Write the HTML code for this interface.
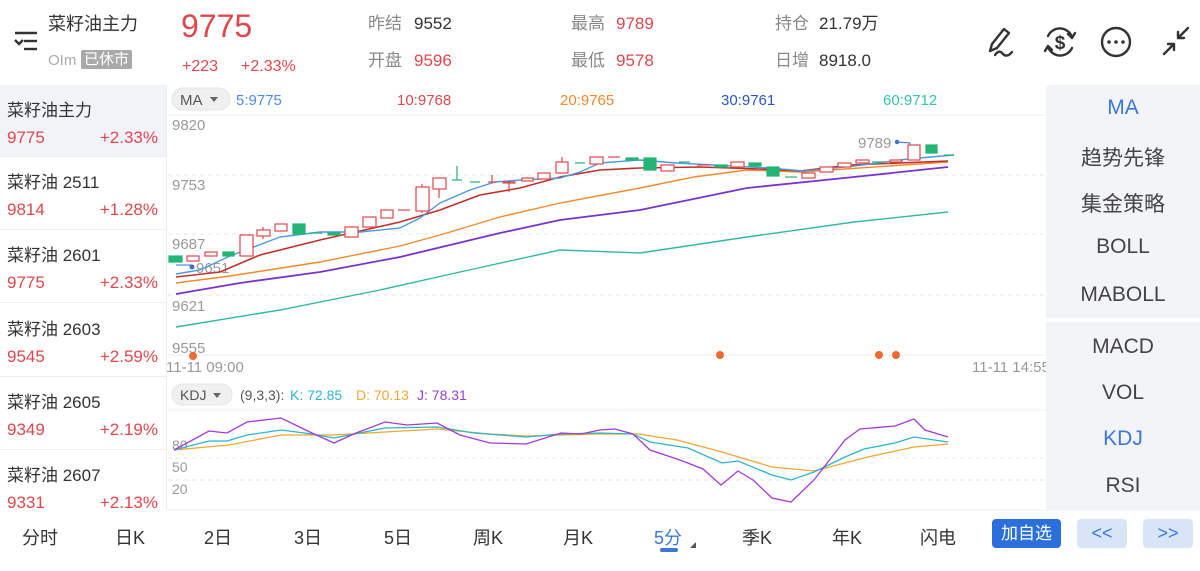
<!DOCTYPE html>
<html><head><meta charset="utf-8"><style>
*{margin:0;padding:0;box-sizing:border-box}
body{width:1200px;height:571px;background:#fff;font-family:"Liberation Sans","Noto Sans CJK SC",sans-serif;position:relative;overflow:hidden;color:#333}
.a{position:absolute;white-space:nowrap;line-height:1}
.r{color:#e0474d}.g{color:#888}.d{color:#333}
.li{position:absolute;left:0;width:166px;height:73px;border-bottom:1px solid #eee}
.li .n{position:absolute;left:7px;top:11px;font-size:17px;color:#333}
.li .p{position:absolute;left:7px;top:43px;font-size:17px;color:#e0474d}
.li .c{position:absolute;right:8px;top:43px;font-size:17px;color:#e0474d}
.rp{position:absolute;left:1046px;width:154px;background:#f3f4f7}
.rp div{position:absolute;width:154px;text-align:center;font-size:21px;color:#444}
.tab{position:absolute;top:524px;font-size:18px;color:#333}
</style></head><body>
<!-- header -->
<svg class="a" style="left:12px;top:30px" width="28" height="24" viewBox="0 0 28 24"><g stroke="#333" stroke-width="2.4" fill="none"><line x1="3" y1="3" x2="25" y2="3"/><line x1="12" y1="11" x2="25" y2="11"/><line x1="12" y1="19" x2="25" y2="19"/><polyline points="3,10 7,14 11,10"/></g></svg>
<div class="a d" style="left:48px;top:15px;font-size:18px">菜籽油主力</div>
<div class="a g" style="left:48px;top:53px;font-size:15px;color:#aaa">OIm</div>
<div class="a" style="left:81px;top:50px;font-size:15px;background:#a9a9a9;color:#fff;padding:2px 3px;border-radius:2px">已休市</div>
<div class="a r" style="left:181px;top:10px;font-size:32px">9775</div>
<div class="a r" style="left:182px;top:59px;font-size:16px">+223</div>
<div class="a r" style="left:241px;top:59px;font-size:16px">+2.33%</div>
<div class="a g" style="left:368px;top:15px;font-size:17px">昨结</div><div class="a d" style="left:414px;top:15px;font-size:17px">9552</div>
<div class="a g" style="left:368px;top:52px;font-size:17px">开盘</div><div class="a r" style="left:414px;top:52px;font-size:17px">9596</div>
<div class="a g" style="left:571px;top:15px;font-size:17px">最高</div><div class="a r" style="left:616px;top:15px;font-size:17px">9789</div>
<div class="a g" style="left:571px;top:52px;font-size:17px">最低</div><div class="a r" style="left:616px;top:52px;font-size:17px">9578</div>
<div class="a g" style="left:775px;top:15px;font-size:17px">持仓</div><div class="a d" style="left:819px;top:15px;font-size:17px">21.79万</div>
<div class="a g" style="left:775px;top:52px;font-size:17px">日增</div><div class="a d" style="left:819px;top:52px;font-size:17px">8918.0</div>
<svg class="a" style="left:985px;top:24px" width="210" height="36" viewBox="0 0 210 36"><g stroke="#333" stroke-width="2.4" fill="none" stroke-linecap="round" stroke-linejoin="round">
<path d="M5 27 L7 20 L19 5 L24 9 L12 24 Z"/><path d="M10 31 Q14 25 18 30 Q22 34 27 28"/>
<path d="M63 12 A13 13 0 0 1 87 13"/><path d="M83 10 L87 14 L90 9"/>
<path d="M87 24 A13 13 0 0 1 63 23"/><path d="M67 26 L63 22 L60 27"/>
<circle cx="131" cy="18" r="14"/>
<path d="M203 4 L193 14 M193 8 L193 14 L199 14 M179 30 L189 20 M183 20 L189 20 L189 26"/></g>
<text x="75" y="25" font-size="19" font-weight="bold" fill="#333" text-anchor="middle" font-family="Liberation Sans">$</text>
<g fill="#333"><circle cx="124" cy="18" r="1.8"/><circle cx="131" cy="18" r="1.8"/><circle cx="138" cy="18" r="1.8"/></g></svg>
<!-- left list -->
<div class="li" style="top:85px;background:#f1f3f9;height:72px"><div class="n">菜籽油主力</div><div class="p">9775</div><div class="c">+2.33%</div></div>
<div class="li" style="top:157px"><div class="n">菜籽油 2511</div><div class="p">9814</div><div class="c">+1.28%</div></div>
<div class="li" style="top:230px"><div class="n">菜籽油 2601</div><div class="p">9775</div><div class="c">+2.33%</div></div>
<div class="li" style="top:304px"><div class="n">菜籽油 2603</div><div class="p">9545</div><div class="c">+2.59%</div></div>
<div class="li" style="top:377px"><div class="n">菜籽油 2605</div><div class="p">9349</div><div class="c">+2.19%</div></div>
<div class="li" style="top:450px;border:none"><div class="n">菜籽油 2607</div><div class="p">9331</div><div class="c">+2.13%</div></div>
<div class="a" style="left:166px;top:85px;width:1px;height:425px;background:#eee"></div>
<!-- chart -->
<svg class="a" style="left:0;top:0" width="1200" height="571" viewBox="0 0 1200 571" font-family="Liberation Sans">
<rect x="172" y="88" width="58" height="22" rx="11" fill="#f0f0f0" stroke="#e4e4e4"/>
<text x="180" y="105" font-size="15" fill="#555">MA</text><path d="M210 97 L218 97 L214 102Z" fill="#666"/>
<text x="236" y="105" font-size="15" fill="#4a8fe0">5:9775</text>
<text x="397" y="105" font-size="15" fill="#e0474d">10:9768</text>
<text x="560" y="105" font-size="15" fill="#ef8a2c">20:9765</text>
<text x="721" y="105" font-size="15" fill="#2b55c0">30:9761</text>
<text x="883" y="105" font-size="15" fill="#33c4b0">60:9712</text>
<line x1="168" y1="115" x2="1046" y2="115" stroke="#eee"/>
<g stroke="#e6e6e6" stroke-dasharray="4,4"><line x1="168" y1="175" x2="1046" y2="175"/><line x1="168" y1="234" x2="1046" y2="234"/><line x1="168" y1="295" x2="1046" y2="295"/></g>
<line x1="168" y1="355" x2="1046" y2="355" stroke="#eee"/>
<g font-size="15" fill="#999"><text x="172" y="130">9820</text><text x="172" y="190">9753</text><text x="172" y="249">9687</text><text x="172" y="311">9621</text><text x="172" y="353">9555</text><text x="196" y="273">9651</text><text x="858" y="148">9789</text>
<text x="166" y="372">11-11 09:00</text><text x="972" y="372">11-11 14:55</text></g>
<polyline points="176,265 192,265" stroke="#3b6fd0" fill="none"/><circle cx="192" cy="267" r="2.5" fill="#3b6fd0"/>
<polyline points="897,142 910,143 910,146" stroke="#3b6fd0" fill="none"/><circle cx="897" cy="142" r="2.2" fill="#3b6fd0"/>
<g fill="none" stroke-width="1.4">
<polyline stroke="#33b8a5" points="176,327 280,310 380,290 460,272 560,250 640,253 747,237 854,222 948,212"/>
<polyline stroke="#7a33cc" stroke-width="1.8" points="176,294 240,283 320,272 400,257 500,233 560,220 640,210 747,188 854,177 948,167"/>
<polyline stroke="#ef8a2c" points="176,283 230,276 320,262 400,246 440,235 500,217 560,203 640,188 694,177 747,170 801,172 948,162"/>
<polyline stroke="#c0302a" stroke-width="1.6" points="176,277 220,272 260,255 320,240 400,222 440,210 480,195 520,188 560,177 600,170 640,168 700,167 760,169 800,171 850,165 948,161"/>
<polyline stroke="#4a9ae0" points="176,274 200,270 230,256 280,237 320,232 360,232 400,228 420,218 440,203 470,190 495,182 520,180 560,178 580,172 600,163 640,160 676,163 769,168 804,171 854,166 908,159 954,155"/>
</g>
<g stroke="#e0474d" fill="#fff" stroke-width="1.2">
<rect x="187" y="256" width="12" height="5"/><rect x="205" y="252" width="12" height="4"/><rect x="240" y="235" width="13" height="21"/><line x1="263" y1="227" x2="263" y2="239"/><rect x="257" y="230" width="13" height="6"/><rect x="275" y="224" width="12" height="7"/><rect x="345" y="227" width="13" height="10"/><rect x="363" y="217" width="13" height="10"/><rect x="381" y="210" width="12" height="8"/><line x1="398" y1="210" x2="410" y2="210"/><line x1="422" y1="184" x2="422" y2="213"/><rect x="416" y="187" width="13" height="24"/><line x1="439" y1="189" x2="439" y2="198"/><rect x="433" y="178" width="13" height="11"/><line x1="488" y1="182" x2="497" y2="182"/><line x1="492" y1="175" x2="492" y2="182"/><line x1="509" y1="182" x2="509" y2="192"/><rect x="503" y="182" width="12" height="1"/><rect x="522" y="178" width="11" height="3"/><rect x="538" y="173" width="12" height="6"/><line x1="562" y1="157" x2="562" y2="162"/><rect x="556" y="162" width="12" height="11"/><rect x="590" y="157" width="13" height="7"/><line x1="608" y1="157" x2="620" y2="157"/><rect x="661" y="165" width="13" height="6"/><line x1="697" y1="165" x2="710" y2="165"/><rect x="731" y="162" width="13" height="5"/><rect x="802" y="173" width="13" height="5"/><rect x="820" y="167" width="13" height="5"/><rect x="838" y="163" width="13" height="4"/><rect x="856" y="160" width="13" height="3"/><rect x="890" y="160" width="12" height="2"/><rect x="908" y="145" width="12" height="15"/>
</g>
<g fill="#22b573" stroke="#22b573" stroke-width="1.2">
<rect x="169" y="256" width="13" height="6"/><rect x="223" y="252" width="11" height="4"/><rect x="293" y="224" width="12" height="10"/><line x1="310" y1="233" x2="322" y2="233"/><rect x="328" y="233" width="12" height="2"/><line x1="457" y1="166" x2="457" y2="180"/><line x1="452" y1="180" x2="462" y2="180"/><line x1="470" y1="182" x2="480" y2="182"/><line x1="575" y1="163" x2="585" y2="163"/><rect x="626" y="158" width="12" height="2"/><rect x="644" y="158" width="12" height="12"/><line x1="679" y1="162" x2="690" y2="162"/><rect x="715" y="165" width="12" height="2"/><rect x="749" y="163" width="12" height="3"/><rect x="767" y="167" width="12" height="9"/><line x1="785" y1="177" x2="797" y2="177"/><line x1="872" y1="162" x2="885" y2="162"/><rect x="926" y="145" width="11" height="8"/><line x1="944" y1="155" x2="954" y2="155"/>
</g>
<g fill="#f26a2e"><circle cx="193" cy="356" r="4"/><circle cx="720" cy="355" r="4"/><circle cx="879" cy="355" r="4"/><circle cx="896" cy="355" r="4"/></g>
<!-- KDJ -->
<rect x="172" y="384" width="60" height="21" rx="10.5" fill="#f0f0f0" stroke="#e4e4e4"/>
<text x="180" y="400" font-size="14" fill="#555">KDJ</text><path d="M213 393 L221 393 L217 398Z" fill="#666"/>
<text x="240" y="400" font-size="14" fill="#555">(9,3,3):</text>
<text x="290" y="400" font-size="14" fill="#2bb5cc">K: 72.85</text>
<text x="356" y="400" font-size="14" fill="#f0a830">D: 70.13</text>
<text x="417" y="400" font-size="14" fill="#9a40d0">J: 78.31</text>
<line x1="168" y1="410" x2="1046" y2="410" stroke="#f2f2f2"/>
<g stroke="#e6e6e6" stroke-dasharray="4,4"><line x1="168" y1="458" x2="1046" y2="458"/><line x1="168" y1="480" x2="1046" y2="480"/></g>
<line x1="168" y1="510" x2="1200" y2="510" stroke="#eee"/>
<g font-size="14" fill="#999"><text x="172" y="450">80</text><text x="172" y="472">50</text><text x="172" y="494">20</text></g>
<g fill="none" stroke-width="1.3">
<polyline stroke="#f0a830" points="174,450 229,445 281,435 334,435 385,432 437,429 490,434 526,436 600,434 638,434 677,440 722,452 772,467 814,471 868,457 914,447 948,444"/>
<polyline stroke="#2bb5cc" points="174,450 209,441 227,441 247,435 281,430 312,434 334,438 385,428 437,427 474,433 526,437 561,434 600,433 633,434 650,442 688,448 722,463 738,461 772,475 791,480 814,472 845,457 864,449 895,443 914,437 948,442"/>
<polyline stroke="#a43ad6" points="174,450 209,431 227,433 247,422 281,418 312,433 334,443 356,433 385,422 407,425 437,423 460,435 490,443 526,444 561,433 581,434 600,430 615,429 633,434 650,450 680,460 703,469 721,485 738,471 753,480 772,498 791,502 814,480 845,440 860,429 895,426 914,419 925,430 948,437"/>
</g>
</svg>
<!-- right panel -->
<div class="rp" style="top:85px;height:233px"><div style="top:11px;color:#3a78d8">MA</div><div style="top:57px">趋势先锋</div><div style="top:103px">集金策略</div><div style="top:150px">BOLL</div><div style="top:198px">MABOLL</div></div>
<div class="rp" style="top:322px;height:188px"><div style="top:13px">MACD</div><div style="top:59px">VOL</div><div style="top:105px;color:#3a78d8">KDJ</div><div style="top:152px">RSI</div></div>
<!-- tabs -->
<div class="tab" style="left:22px">分时</div><div class="tab" style="left:115px">日K</div><div class="tab" style="left:204px">2日</div><div class="tab" style="left:294px">3日</div><div class="tab" style="left:384px">5日</div><div class="tab" style="left:473px">周K</div><div class="tab" style="left:563px">月K</div>
<div class="tab" style="left:654px;color:#3a78d8">5分</div><div class="a" style="left:660px;top:548px;width:18px;height:4px;border-radius:2px;background:#3a78d8"></div><div class="a" style="left:690px;top:542px;width:0;height:0;border-left:6px solid transparent;border-bottom:6px solid #555"></div>
<div class="tab" style="left:742px">季K</div><div class="tab" style="left:832px">年K</div><div class="tab" style="left:920px">闪电</div>
<div class="a" style="left:992px;top:519px;width:69px;height:29px;background:#2b6fdd;border-radius:4px;color:#fff;font-size:17px;text-align:center;line-height:29px">加自选</div>
<div class="a" style="left:1077px;top:519px;width:50px;height:29px;background:#d8e5f8;border-radius:4px;color:#3a78d8;font-size:18px;text-align:center;line-height:28px">&lt;&lt;</div>
<div class="a" style="left:1143px;top:519px;width:50px;height:29px;background:#d8e5f8;border-radius:4px;color:#3a78d8;font-size:18px;text-align:center;line-height:28px">&gt;&gt;</div>
</body></html>
